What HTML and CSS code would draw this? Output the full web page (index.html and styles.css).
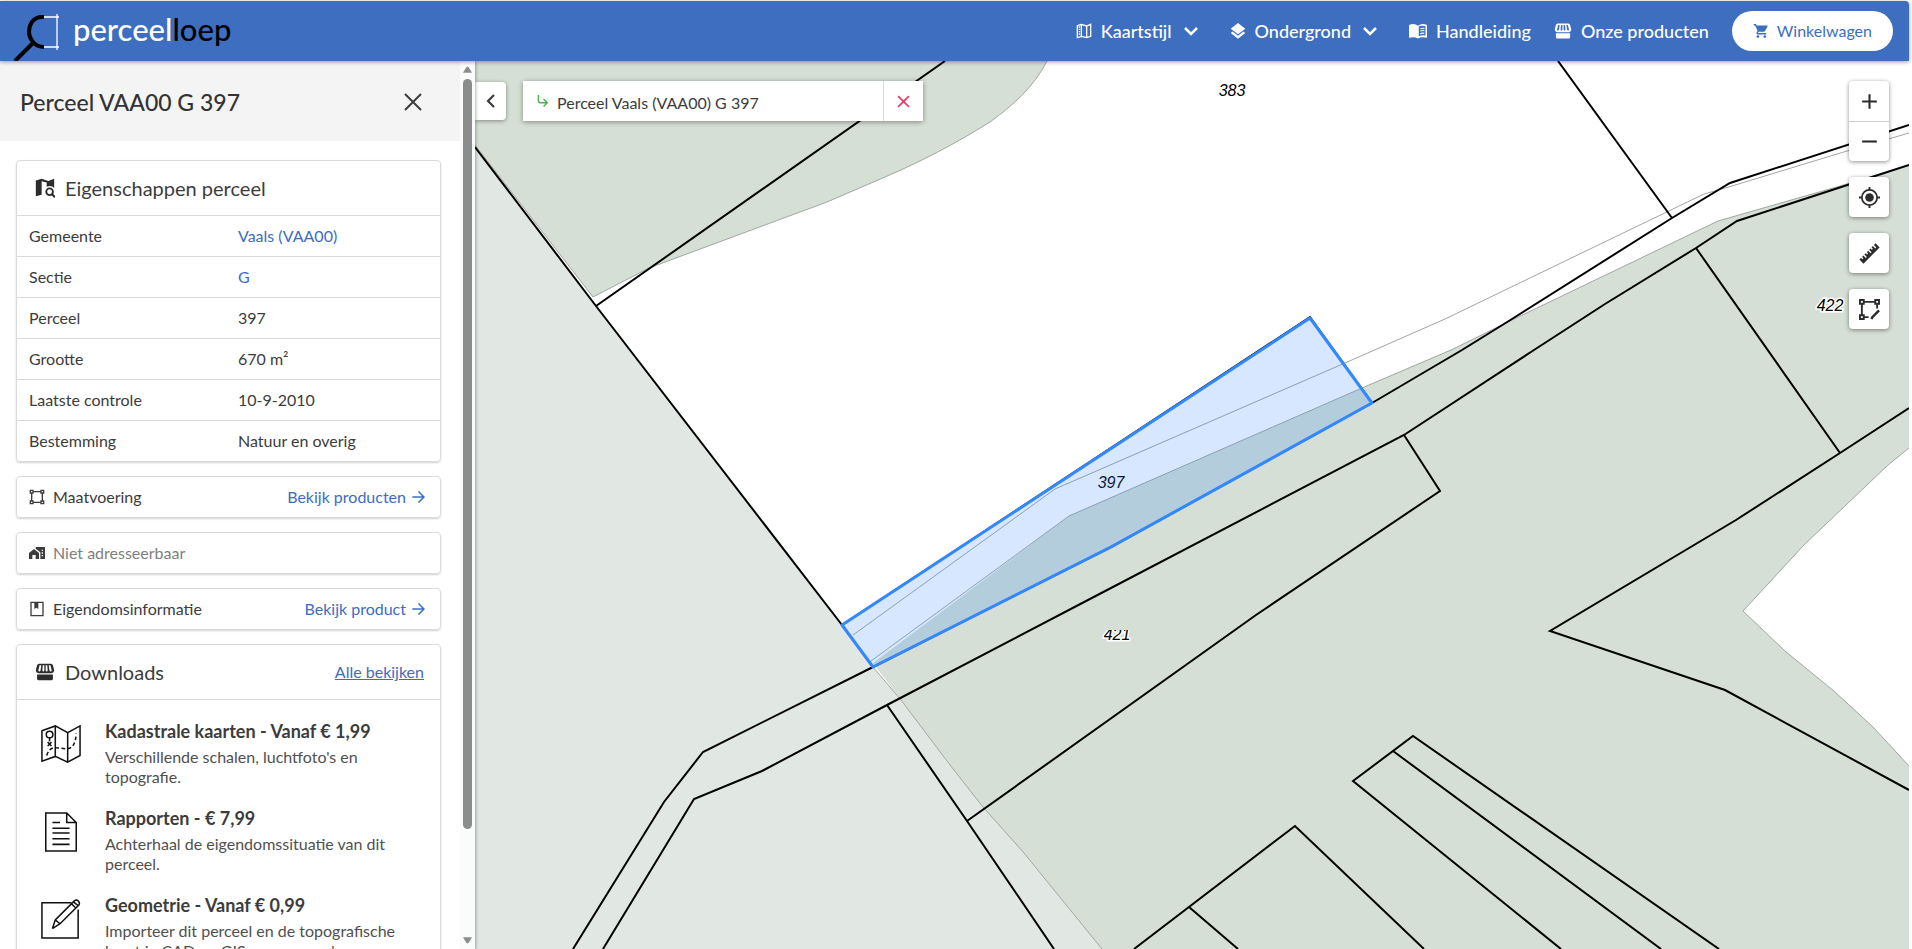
FILE: index.html
```html
<!DOCTYPE html>
<html lang="nl">
<head>
<meta charset="utf-8">
<meta name="viewport" content="width=device-width, initial-scale=1">
<title>Perceelloep - Perceel VAA00 G 397</title>
<link rel="stylesheet" href="styles.css">
</head>
<body>
<svg class="sprite" aria-hidden="true">
  <symbol id="store" viewBox="0 0 24 24">
    <path fill-rule="evenodd" d="M5 2h14q2 0 2.500 2l1.500 6q0 3-3 3.500H4q-3-.5-3-3.500l1.500-6Q3 2 5 2zM5.500 4 4 10q0 1.500 1.200 1.500T6.700 10l.8-6zM9.300 4 8.800 10q0 1.500 1.200 1.500T11.200 10V4zM12.800 4v6q0 1.500 1.200 1.500T15.200 10l-.5-6zM16.500 4l.8 6q.3 1.500 1.500 1.500T20 10l-1.500-6z"/>
    <path d="M2.500 15h19v5q0 2-2 2h-15q-2 0-2-2z"/>
  </symbol>
  <symbol id="arrow" viewBox="0 0 24 24"><path d="M12 3l-1.600 1.600L16.700 11H2v2.200h14.700l-6.300 6.200L12 21l9-9z"/></symbol>
  <symbol id="chevron" viewBox="0 0 16 16"><path d="M2 5l6 6 6-6" fill="none" stroke="currentColor" stroke-width="2.500"/></symbol>
  <symbol id="shape" viewBox="0 0 24 24"><path d="M23 7V1h-6v2H7V1H1v6h2v10H1v6h6v-2h10v2h6v-6h-2V7h2zM3 3h2v2H3V3zm2 18H3v-2h2v2zm12-2H7v-2H5V7h2V5h10v2h2v10h-2v2zm4 2h-2v-2h2v2zM19 5V3h2v2h-2z"/></symbol>
</svg>

<header class="topbar">
  <a class="brand" href="#" aria-label="perceelloep">
    <svg class="brand-mark" viewBox="0 0 50 48" aria-hidden="true">
      <path d="M32 4C20 3 17 13 17 19s5 15 15 15M21 30 3 48" fill="none" stroke="#000" stroke-width="4"/>
      <path d="M32 4h15M32 34h15M45 1v36" fill="none" stroke="#fff" stroke-width="1.300"/>
    </svg>
    <span class="brand-name">perceel<span class="brand-dark">loep</span></span>
  </a>
  <nav class="nav">
    <button class="nav-item nav-menu" type="button">
      <svg class="icon" viewBox="0 0 24 24"><path d="M2 4l6-2 8 2.500L22 2v18l-6 2-8-2-6 2zM8 2v18M16 4v18" fill="none" stroke="currentColor" stroke-width="2"/><path d="M5 5v14" stroke="currentColor" stroke-width="2" stroke-dasharray="2 1.500"/></svg>
      <span>Kaartstijl</span>
      <svg class="icon chevron"><use href="#chevron"/></svg>
    </button>
    <button class="nav-item nav-menu" type="button">
      <svg class="icon" viewBox="1 1 22 22"><path d="M12 18.500l-7.400-5.700L2 14.800l10 7.700 10-7.700-2.600-2zM12 16.500l10-7.700L12 1 2 8.800z"/></svg>
      <span>Ondergrond</span>
      <svg class="icon chevron"><use href="#chevron"/></svg>
    </button>
    <a class="nav-item" href="#">
      <svg class="icon icon-wide" viewBox="0 0 24 24"><path fill-rule="evenodd" d="M0 4q7-3 12 1 5-4 12-1v17q-7-2-12 1Q7 19 0 21zM13 6v13q4-2 9-1V5.500Q17 4.500 13 6z"/><path d="M15 9q3-1 5.500-.5M15 12q3-1 5.500-.5M15 15.500q3-1 5.500-.5" fill="none" stroke="currentColor" stroke-width="1.600"/></svg>
      <span>Handleiding</span>
    </a>
    <a class="nav-item" href="#">
      <svg class="icon icon-wide"><use href="#store"/></svg>
      <span>Onze producten</span>
    </a>
    <button class="cart" type="button">
      <svg class="icon" viewBox="0 1 23 22"><path d="M7 18c-1.100 0-2 .9-2 2s.9 2 2 2 2-.9 2-2-.9-2-2-2zM1 2v2h2l3.600 7.600-1.350 2.450C4.500 15.500 5.500 17 7 17h12v-2H7.400l-.2-.4.9-1.600h7.450c.75 0 1.400-.4 1.750-1l3.600-6.500c.4-.7-.2-1.500-.9-1.500H5.200l-.9-2zm16 16c-1.100 0-2 .9-2 2s.9 2 2 2 2-.9 2-2-.9-2-2-2z"/></svg>
      <span>Winkelwagen</span>
    </button>
  </nav>
</header>

<div class="layout">
  <aside class="sidebar">
    <div class="panel">
      <div class="panel-head">
        <h1 class="panel-title">Perceel VAA00 G 397</h1>
        <button class="close" type="button" aria-label="Sluiten"><svg class="icon" viewBox="0 0 18 18"><path d="M1 1l16 16M17 1 1 17" stroke="currentColor" stroke-width="2"/></svg></button>
      </div>
      <div class="cards">
        <section class="card">
          <div class="card-head">
            <svg class="icon icon-card" viewBox="0 0 24 24"><path d="M1 3l7-2 8 2.500L23 1v11q-2-2.500-5-2.500-2 0-4 1V5.500L8 4v16l-7 2z"/><circle cx="17.500" cy="16.500" r="4" fill="none" stroke="currentColor" stroke-width="2.200"/><path d="M20 19l4 4" stroke="currentColor" stroke-width="2.600"/></svg>
            <h2 class="card-title">Eigenschappen perceel</h2>
          </div>
          <table class="props">
            <tr><th scope="row">Gemeente</th><td><a href="#">Vaals (VAA00)</a></td></tr>
            <tr><th scope="row">Sectie</th><td><a href="#">G</a></td></tr>
            <tr><th scope="row">Perceel</th><td>397</td></tr>
            <tr><th scope="row">Grootte</th><td>670 m²</td></tr>
            <tr><th scope="row">Laatste controle</th><td>10-9-2010</td></tr>
            <tr><th scope="row">Bestemming</th><td>Natuur en overig</td></tr>
          </table>
        </section>
        <section class="card row-card">
          <svg class="icon icon-row"><use href="#shape"/></svg>
          <span class="row-label">Maatvoering</span>
          <a class="row-link" href="#">Bekijk producten <svg class="icon icon-row"><use href="#arrow"/></svg></a>
        </section>
        <section class="card row-card">
          <svg class="icon icon-row" viewBox="0 2 24 20"><path fill-rule="evenodd" d="M0 12l7.500-6L15 12v9h-5v-6H5v6H0zM10 3h14v18h-7V11l-7-5.500zM19 7v2h2V7zm0 4v2h2v-2zm0 4v2h2v-2z"/></svg>
          <span class="row-label muted">Niet adresseerbaar</span>
        </section>
        <section class="card row-card">
          <svg class="icon icon-row" viewBox="0 0 24 24"><path d="M3 2h18v20H3z" fill="none" stroke="currentColor" stroke-width="2"/><path d="M8 3h6v9l-3-2-3 2z"/></svg>
          <span class="row-label">Eigendomsinformatie</span>
          <a class="row-link" href="#">Bekijk product <svg class="icon icon-row"><use href="#arrow"/></svg></a>
        </section>
        <section class="card">
          <div class="card-head">
            <svg class="icon icon-card"><use href="#store"/></svg>
            <h2 class="card-title">Downloads</h2>
            <a class="all-link" href="#">Alle bekijken</a>
          </div>
          <div class="downloads">
            <article class="download">
              <svg class="download-icon" viewBox="0 0 42 42" fill="none" stroke="#111" stroke-width="1.600"><path d="M1 6l14-5 13 7 13-7v31l-13 7-13-6-14 5zM15 1v32M28 8v31"/><circle cx="9" cy="10" r="3.500"/><path d="M9 13v4M7 18l4 4M11 18l-4 4"/><path d="M6 32q3-9 10-8l11 1q9 0 10-16" stroke-dasharray="4 2.500"/></svg>
              <div><h3 class="download-title">Kadastrale kaarten - Vanaf € 1,99</h3><p class="download-text">Verschillende schalen, luchtfoto's en topografie.</p></div>
            </article>
            <article class="download">
              <svg class="download-icon" viewBox="0 0 42 42" fill="none" stroke="#111" stroke-width="1.600"><path d="M5 1h22l10 10v30H5zM27 1v10h10M12 11h8M12 17h18M12 22h18M12 28h18M12 34h18"/></svg>
              <div><h3 class="download-title">Rapporten - € 7,99</h3><p class="download-text">Achterhaal de eigendomssituatie van dit perceel.</p></div>
            </article>
            <article class="download">
              <svg class="download-icon" viewBox="0 0 42 42" fill="none" stroke="#111" stroke-width="1.600"><path d="M32 4H1v37h38V11"/><path d="M12 31l3-9L35 2q2-2 4 0t1 4L20 26l-8 5M15 22l5 4M32 5l5 5M34 3l5 4"/></svg>
              <div><h3 class="download-title">Geometrie - Vanaf € 0,99</h3><p class="download-text">Importeer dit perceel en de topografische kaart in CAD en GIS-programma's.</p></div>
            </article>
          </div>
        </section>
      </div>
    </div>
    <div class="scrollbar" aria-hidden="true">
      <svg class="scroll-arrow" viewBox="0 0 10 8"><path d="M5 0q1 0 2 2l3 5H0l3-5q1-2 2-2z"/></svg>
      <div class="scroll-track"><div class="scroll-thumb"></div></div>
      <svg class="scroll-arrow" viewBox="0 0 10 8"><path d="M5 8q1 0 2-2l3-5H0l3 5q1 2 2 2z"/></svg>
    </div>
  </aside>

  <main class="map">
    <svg class="map-canvas" viewBox="475 61 1434 888" preserveAspectRatio="xMidYMid slice" role="img" aria-label="Kadastrale kaart">
      <clipPath id="tile"><path d="M1080 630h80v30h-80z"/></clipPath>
      <g class="land">
        <path d="M475 61H1047C1034 87 1012 106 990 122 955 144 920 162 885 177L827 202 738 235 649 268 593 297 475 145z"/>
        <path d="M873 663 1069 516 1362 388 1451 350 1512 320 1718 221 1847 184 1909 165V448L1888 465 1804 545 1743 611 1785 651 1835 692 1873 727 1909 766V949H1102L1024 853 983 807 950 765 901 700z"/>
      </g>
      <path class="abroad" d="M475 147 596 306 842 625 873 667 901 700 950 765 983 807 1024 853 1102 949H475z"/>
      <g class="thin">
        <path d="M1047 61C1034 87 1012 106 990 122 955 144 920 162 885 177L827 202 738 235 649 268 593 297 475 145"/>
        <path d="M853 635 1055 489 1345 363 1445 319 1704 194 1732 186 1847 151 1909 133"/>
        <path d="M871 661 1069 516 1362 388 1451 350 1512 320 1718 221 1847 184 1909 165"/>
        <path d="M873 667 901 700 950 765 983 807 1024 853 1102 949M1909 448 1888 465 1804 545 1743 611 1785 651 1835 692 1873 727 1909 766"/>
      </g>
      <g class="border">
        <path d="M475 147 596 306 842 625 873 667M596 306 945 61M842 625 1310 317 1372 403"/>
        <path d="M1558 61 1672 218M1909 125 1730 183 1672 218 1512 319 1462 350 1372 403 1111 547 873 667 703 752 664 802 573 949"/>
        <path d="M1909 165 1737 221 1696 248 1605 304 1534 350 1404 435 1088 600 887 705 762 771 694 799 603 949"/>
        <path d="M1404 435 1440 491 1256 615 967 821M887 705 967 821 1054 949M1696 248 1840 453M1909 408 1840 453 1736 520 1550 631 1725 690 1909 790"/>
        <path d="M1719 949 1413 736 1353 781 1561 949M1393 751 1661 949M1134 949 1295 826 1424 949M1189 907 1238 949"/>
      </g>
      <g class="parcel-no">
        <text x="1232" y="96">383</text>
        <text x="1111" y="488">397</text>
        <text x="1117" y="640" clip-path="url(#tile)">421</text>
        <text x="1830" y="311">422</text>
      </g>
      <path class="selection" d="M842 625 1310 318 1372 403 1111 547 873 667z"/>
    </svg>

    <div class="map-top">
      <button class="collapse" type="button" aria-label="Inklappen"><svg class="icon" viewBox="0 0 16 16"><path d="M11 2 5 8l6 6" fill="none" stroke="currentColor" stroke-width="2.200"/></svg></button>
      <form class="search">
        <svg class="icon search-arrow" viewBox="3 3 17 19"><path d="M19 15l-6 6-1.400-1.400L15.200 16H7q-3 0-3-3V4h2v8q0 2 2 2h7.200l-3.600-3.600L13 9z"/></svg>
        <input class="search-input" type="text" aria-label="Zoek perceel" value="Perceel Vaals (VAA00) G 397">
        <button class="clear" type="button" aria-label="Wissen"><svg class="icon" viewBox="0 0 12 12"><path d="M1 1l10 10M11 1 1 11" stroke="currentColor" stroke-width="1.500"/></svg></button>
      </form>
    </div>

    <div class="tools">
      <div class="tool-group">
        <button class="tool" type="button" aria-label="Inzoomen"><svg class="icon" viewBox="0 0 20 20"><path d="M3 10h14M10 3v14" stroke="currentColor" stroke-width="2"/></svg></button>
        <button class="tool" type="button" aria-label="Uitzoomen"><svg class="icon" viewBox="0 0 20 20"><path d="M3 10h14" stroke="currentColor" stroke-width="2"/></svg></button>
      </div>
      <div class="tool-group"><button class="tool" type="button" aria-label="Mijn locatie"><svg class="icon" viewBox="1 1 22 22"><circle cx="12" cy="12" r="4.500"/><circle cx="12" cy="12" r="8" fill="none" stroke="currentColor" stroke-width="1.800"/><path d="M12 1v3M12 20v3M1 12h3M20 12h3" stroke="currentColor" stroke-width="2"/></svg></button></div>
      <div class="tool-group"><button class="tool" type="button" aria-label="Meten"><svg class="icon" viewBox="1 1 22 22"><path d="M1.390 18.360L3.160 16.600L4.580 18L5.640 16.950L4.220 15.540L5.640 14.120L8.110 16.600L9.170 15.540L6.700 13.060L8.110 11.650L9.530 13.060L10.590 12L9.170 10.590L10.590 9.170L13.060 11.650L14.120 10.590L11.650 8.110L13.060 6.700L14.470 8.110L15.540 7.050L14.120 5.640L15.540 4.220L18 6.700L19.070 5.640L16.600 3.160L18.360 1.390L22.610 5.640L5.640 22.610L1.390 18.360Z"/></svg></button></div>
      <div class="tool-group"><button class="tool" type="button" aria-label="Tekenen"><svg class="icon" viewBox="1 1 22 22" fill="none" stroke="currentColor" stroke-width="2"><path class="hollow" d="M2 2h4v4H2zM18 2h4v4h-4zM2 18h4v4H2zM6 4h12M4 6v12M6 20h5M20 6v5"/><path d="M14 22l1-2 7-7" stroke-width="2.600"/></svg></button></div>
    </div>
  </main>
</div>
</body>
</html>
```

FILE: styles.css
```css
* { box-sizing: border-box; }

body {
  margin: 0;
  height: 100vh;
  padding: 1px 3px 0 0;
  display: flex;
  flex-direction: column;
  overflow: hidden;
  background: #fff;
  color: #3c3c3c;
  font: 16px/20px Lato, sans-serif;
}

h1, h2, h3, p { margin: 0; font-weight: 400; }
button, input { font: inherit; color: inherit; border: 0; background: none; padding: 0; }
button { cursor: pointer; }
a { color: #3d6dbf; text-decoration: none; }

.sprite { display: none; }
.icon { width: 16px; height: 16px; flex: none; fill: currentColor; display: block; }
.hollow { fill: none; }

/* Top bar */
.topbar {
  position: relative;
  z-index: 2;
  flex: none;
  height: 60px;
  padding-right: 16px;
  display: flex;
  justify-content: space-between;
  align-items: center;
  background: #3d6ebf;
  border-top-right-radius: 4px;
  box-shadow: 0 1px 4px rgba(0, 0, 0, .4);
}
.brand { display: flex; align-self: stretch; gap: 11px; padding: 12px 0 0 12px; color: #fff; }
.brand-mark { width: 50px; height: 48px; }
.brand-name { font-size: 31px; line-height: 32px; font-weight: 500; }
.brand-dark { color: #000; }
.nav { display: flex; align-items: center; gap: 23px; color: #fff; font-size: 18px; font-weight: 500; }
.nav-item { display: flex; align-items: center; gap: 9px; color: #fff; }
.nav-menu { margin-right: 8px; }
.chevron { margin-left: 2px; }
.icon-wide { width: 18px; height: 18px; }
.cart {
  height: 40px;
  padding: 0 21px;
  display: flex;
  align-items: center;
  gap: 8px;
  border-radius: 20px;
  background: #fff;
  color: #3d6ebf;
  font-size: 16px;
  font-weight: 400;
}

/* Page body */
.layout { flex: 1; min-height: 0; display: flex; }
.sidebar {
  position: relative;
  z-index: 1;
  flex: none;
  width: 475px;
  display: flex;
  background: #fff;
  box-shadow: 1px 0 3px rgba(0, 0, 0, .3);
}
.panel { flex: 1; overflow: hidden; }
.panel-head {
  height: 80px;
  padding: 2px 38px 0 20px;
  display: flex;
  align-items: center;
  justify-content: space-between;
  background: #f4f4f4;
}
.panel-title { font-size: 23px; line-height: 28px; font-weight: 500; color: #333; }
.close { width: 18px; height: 18px; }
.close .icon { width: 18px; height: 18px; }

.scrollbar { width: 15px; padding: 5px 0; display: flex; flex-direction: column; align-items: center; background: #fafcfb; }
.scroll-arrow { width: 9px; height: 8px; fill: #8a8d8c; }
.scroll-track { flex: 1; padding: 5px 0; }
.scroll-thumb { width: 9px; height: 88%; border-radius: 5px; background: #8a8d8c; }

/* Cards */
.cards { padding: 19px 19px 0 16px; display: flex; flex-direction: column; gap: 14px; }
.card { border: 1px solid #d9dbda; border-radius: 4px; box-shadow: 0 1px 2px rgba(0, 0, 0, .18); }
.card-head { height: 55px; padding: 0 16px 0 18px; display: flex; align-items: center; gap: 10px; border-bottom: 1px solid #d9dbda; }
.icon-card { width: 20px; height: 20px; color: #2c2c2c; }
.card-title { font-size: 20px; line-height: 28px; }
.all-link { margin-left: auto; text-decoration: underline; }

.props { width: 100%; border-collapse: separate; border-spacing: 0; table-layout: fixed; }
.props th, .props td { height: 41px; padding: 0 12px; text-align: left; font-weight: 400; border-bottom: 1px solid #d9dbda; }
.props th { width: 209px; }
.props tr:last-child th, .props tr:last-child td { height: 40px; border-bottom: 0; }

.row-card { height: 42px; padding: 0 13px 0 12px; display: flex; align-items: center; gap: 8px; }
.icon-row { width: 16px; height: 16px; }
.row-link { margin-left: auto; display: flex; align-items: center; gap: 5px; }
.muted { color: #808080; }

.downloads { padding: 18px 24px; display: flex; flex-direction: column; gap: 18px; }
.download { display: flex; gap: 24px; }
.download-icon { flex: none; width: 40px; height: 40px; margin-top: 7px; }
.download-title { font-size: 18px; line-height: 26px; font-weight: 700; }
.download-text { padding-top: 3px; color: #505050; }

/* Map */
.map { position: relative; flex: 1; min-width: 0; overflow: hidden; background: #fff; }
.map-canvas { display: block; width: 100%; height: 100%; }
.land { fill: #d5dfd5; }
.abroad { fill: #e1e7e2; }
.thin { fill: none; stroke: #a0a6a1; stroke-width: 1; }
.border { fill: none; stroke: #000; stroke-width: 2; }
.selection { fill: #3388ff; fill-opacity: .2; stroke: #3388ff; stroke-width: 3; stroke-linejoin: round; }
.parcel-no { font: italic 16px "Liberation Sans", sans-serif; text-anchor: middle; fill: #000; stroke: #fff; stroke-width: 3; paint-order: stroke; }

.map-top { position: absolute; top: 20px; left: 0; display: flex; align-items: center; gap: 17px; }
.collapse { width: 31px; height: 38px; display: grid; place-items: center; background: #fff; border-radius: 0 4px 4px 0; box-shadow: 0 1px 4px rgba(0, 0, 0, .4); }
.search { width: 400px; height: 40px; padding-left: 14px; display: flex; align-items: center; gap: 8px; background: #fff; box-shadow: 0 1px 5px rgba(0, 0, 0, .4); }
.search-arrow { width: 12px; height: 14px; color: #4caf50; }
.search-input { flex: 1; min-width: 0; height: 40px; padding-top: 2px; outline: 0; }
.clear { width: 40px; height: 40px; display: grid; place-items: center; border-left: 1px solid #d9dbda; color: #ee3a63; }
.clear .icon { width: 13px; height: 13px; }

.tools { position: absolute; top: 20px; right: 20px; display: flex; flex-direction: column; gap: 16px; }
.tool-group { border-radius: 4px; background: #fff; box-shadow: 0 1px 4px rgba(0, 0, 0, .45); }
.tool { width: 40px; height: 40px; display: grid; place-items: center; color: #2c2c2c; }
.tool + .tool { border-top: 1px solid #ccc; }
.tool .icon { width: 21px; height: 21px; }
```
